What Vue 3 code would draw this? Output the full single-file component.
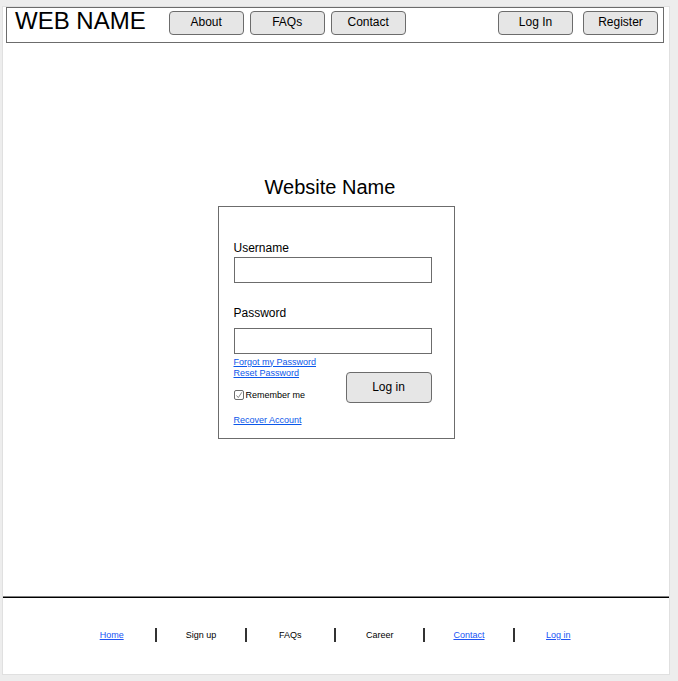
<script setup>
import { ref } from 'vue'

const username = ref('')
const password = ref('')
const remember = ref(true)

const mainNav = ['About', 'FAQs', 'Contact']
const accountNav = ['Log In', 'Register']
const footerItems = [
  { label: 'Home', href: '#home' },
  { label: 'Sign up' },
  { label: 'FAQs' },
  { label: 'Career' },
  { label: 'Contact', href: '#contact' },
  { label: 'Log in', href: '#login' },
]
</script>

<template>
  <div class="page">
    <header class="header">
      <div class="brand">WEB NAME</div>
      <nav class="nav" aria-label="Main">
        <button v-for="item in mainNav" :key="item" type="button" class="btn">{{ item }}</button>
      </nav>
      <div class="nav account">
        <button v-for="item in accountNav" :key="item" type="button" class="btn">{{ item }}</button>
      </div>
    </header>

    <main class="main">
      <h1 class="title">Website Name</h1>
      <form class="card" @submit.prevent>
        <div class="field username">
          <label for="username">Username</label>
          <input id="username" v-model="username" type="text" />
        </div>
        <div class="field password">
          <label for="password">Password</label>
          <input id="password" v-model="password" type="password" />
        </div>
        <div class="actions">
          <div class="links">
            <a href="#forgot">Forgot my Password</a>
            <a href="#reset">Reset Password</a>
            <label class="remember" for="remember">
              <span class="tick">
                <input id="remember" v-model="remember" type="checkbox" />
                <svg v-if="remember" viewBox="0 0 10 10" aria-hidden="true">
                  <path d="M2.5 5.5 4.3 7.6 7.8 2.3" />
                </svg>
              </span>
              Remember me
            </label>
            <a href="#recover">Recover Account</a>
          </div>
          <button type="submit" class="btn submit">Log in</button>
        </div>
      </form>
    </main>

    <footer class="footer">
      <ul class="footer-list">
        <li v-for="item in footerItems" :key="item.label">
          <a v-if="item.href" :href="item.href">{{ item.label }}</a>
          <span v-else>{{ item.label }}</span>
        </li>
      </ul>
    </footer>
  </div>
</template>

<style>
body {
  margin: 0;
  background: #ededed;
}
</style>

<style scoped>
.page,
.page * {
  box-sizing: border-box;
}

.page {
  display: flex;
  flex-direction: column;
  min-height: calc(100vh - 12px);
  margin: 6px 8px 0 2px;
  border: 1px solid #e0e0e0;
  background: #fff;
  color: #000;
  font-family: "Liberation Sans", Arial, sans-serif;
  font-size: 12px;
  line-height: 14px;
}

.header {
  display: flex;
  align-items: flex-start;
  margin: 0 5px 0 3px;
  padding: 3px 5px 7px 8px;
  border: 1px solid #6c6c6c;
}

.brand {
  margin-right: 23px;
  font-size: 24px;
  line-height: 20px;
  white-space: nowrap;
}

.nav {
  display: flex;
  gap: 6px;
}

.account {
  gap: 10px;
  margin-left: auto;
}

.btn {
  width: 75px;
  height: 24px;
  padding: 0 0 2px;
  border: 1px solid #6c6c6c;
  border-radius: 4px;
  background: #e6e6e6;
  color: #000;
  font: inherit;
}

.main {
  flex: 1;
  display: flex;
  flex-direction: column;
  align-items: center;
  justify-content: center;
  padding-bottom: 26px;
}

.title {
  margin: 0 0 7px;
  padding-right: 12px;
  font-size: 20px;
  font-weight: 400;
  line-height: 24px;
}

.card {
  width: 100%;
  max-width: 237px;
  padding: 34px 22px 12px 15px;
  border: 1px solid #6c6c6c;
}

.field {
  display: flex;
  flex-direction: column;
}

.username {
  gap: 2px;
  margin-bottom: 23px;
}

.password {
  gap: 8px;
  margin-bottom: 3px;
}

.field input {
  width: 100%;
  height: 26px;
  padding: 0 6px;
  border: 1px solid #6c6c6c;
  border-radius: 0;
  background: #fff;
  font: inherit;
}

.actions {
  display: flex;
  justify-content: space-between;
  align-items: flex-start;
}

.links {
  display: flex;
  flex-direction: column;
  align-items: flex-start;
  font-size: 9px;
  line-height: 11px;
}

a {
  color: #0b57ea;
  text-decoration: underline;
}

.remember {
  display: flex;
  align-items: center;
  gap: 2px;
  margin: 11px 0 14px;
}

.tick {
  position: relative;
  width: 10px;
  height: 10px;
}

.tick input {
  display: block;
  appearance: none;
  width: 10px;
  height: 10px;
  margin: 0;
  border: 1px solid #6c6c6c;
  border-radius: 2px;
  background: #fff;
}

.tick svg {
  position: absolute;
  inset: 0;
  fill: none;
  stroke: #888;
  stroke-width: 1;
  pointer-events: none;
}

.submit {
  width: 86px;
  height: 31px;
  margin-top: 15px;
  padding: 0;
}

.footer {
  padding: 31px 2px 32px 0;
  border-top: 1px solid #808080;
  box-shadow: inset 0 1px #000;
  font-size: 9px;
  line-height: 11px;
}

.footer-list {
  display: flex;
  max-width: 534px;
  margin: 0 auto;
  padding: 0;
  list-style: none;
}

.footer-list li {
  flex: 1;
  display: flex;
  align-items: center;
  justify-content: center;
  height: 14px;
}

.footer-list li + li {
  border-left: 2px solid #333;
}

.footer a {
  color: #2054f5;
}
</style>
